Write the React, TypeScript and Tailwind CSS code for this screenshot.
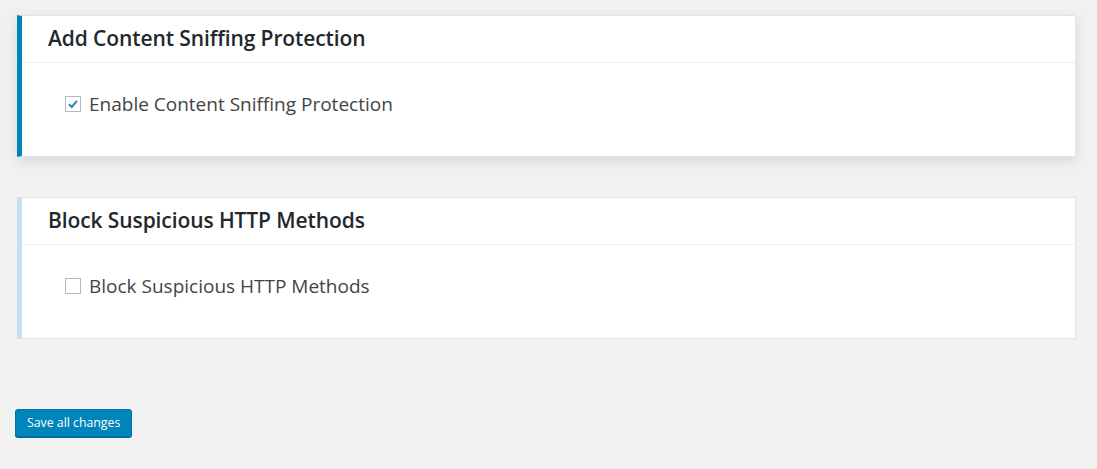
export default function App() {
  return (
    <div className="min-h-[469px] bg-[#f1f1f1] pt-[15px] pl-[17px] pr-[21px] font-['Open_Sans',sans-serif] text-[#23282d]">
      <div className="flex flex-col gap-[40px]">
        {/* active card */}
        <div className="bg-white border border-[#e5e5e5] border-l-[5px] border-l-[#0085ba] shadow-[0_4px_10px_rgba(180,200,215,0.55)]">
          <div className="h-[47px] border-b border-[#eeeeee] pl-[26px] flex items-center">
            <h2 className="text-[21px] font-semibold tracking-[-0.1px]">Add Content Sniffing Protection</h2>
          </div>
          <div className="h-[93px] pl-[43px] pt-[27px]">
            <label className="flex items-center gap-[8px] text-[19px] text-[#444]">
              <span className="w-[16px] h-[16px] border border-[#b4b9be] bg-white flex items-center justify-center">
                <svg width="12" height="12" viewBox="0 0 12 12">
                  <path d="M2 6.3 L4.8 9 L10 2.8" fill="none" stroke="#1e8cbe" strokeWidth="2" />
                </svg>
              </span>
              Enable Content Sniffing Protection
            </label>
          </div>
        </div>

        {/* inactive card */}
        <div className="bg-white border border-[#e5e5e5] border-l-[5px] border-l-[#c4e2ef]">
          <div className="h-[47px] border-b border-[#eeeeee] pl-[26px] flex items-center">
            <h2 className="text-[21px] font-semibold tracking-[-0.1px]">Block Suspicious HTTP Methods</h2>
          </div>
          <div className="h-[93px] pl-[43px] pt-[27px]">
            <label className="flex items-center gap-[8px] text-[19px] text-[#444]">
              <span className="w-[16px] h-[16px] border border-[#b4b9be] bg-white" />
              Block Suspicious HTTP Methods
            </label>
          </div>
        </div>
      </div>

      <div className="mt-[70px] -ml-[2px]">
        <button className="h-[28px] px-[11px] rounded-[3px] bg-[#0085ba] border border-[#0073aa] shadow-[0_1px_0_#006799] text-white text-[12.3px]">
          Save all changes
        </button>
      </div>
    </div>
  );
}
